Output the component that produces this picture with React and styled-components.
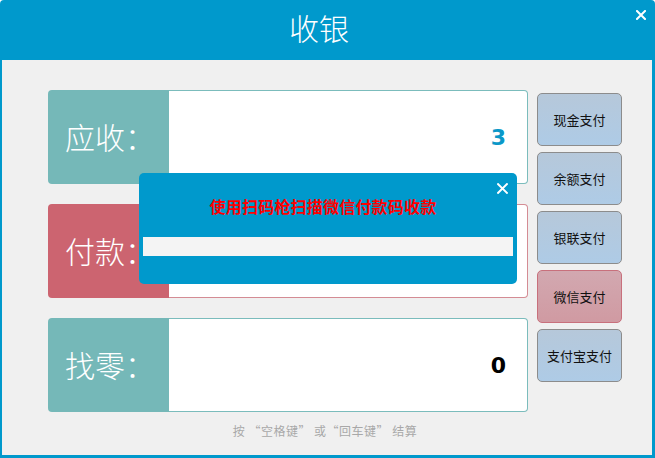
import React from "react";
import styled, { createGlobalStyle } from "styled-components";

const Global = createGlobalStyle`
  html, body { margin: 0; padding: 0; background: #ffffff; }
  body { font-family: "Noto Sans CJK SC", "Noto Sans", sans-serif; }
`;

const Window = styled.div`
  position: relative;
  width: 655px;
  height: 458px;
  box-sizing: border-box;
  background: #0099cc;
  border-radius: 4px 4px 0 0;
  display: flex;
  flex-direction: column;
  padding: 0 3px 3px 2px;
  overflow: hidden;
`;

const Header = styled.div`
  height: 60px;
  display: flex;
  align-items: center;
  justify-content: center;
  color: #ffffff;
  font-family: "Noto Sans CJK SC", sans-serif;
  font-weight: 300;
  font-size: 30px;
  padding: 0 16px 6px 0;
  box-sizing: border-box;
`;

const CloseBtn = styled.div`
  position: absolute;
  top: ${(p) => p.$top}px;
  right: ${(p) => p.$right}px;
  width: ${(p) => p.$size}px;
  height: ${(p) => p.$size}px;
  display: flex;
`;

const Body = styled.div`
  flex: 1;
  background: #f0f0f0;
  padding-top: 30px;
  display: flex;
  flex-direction: column;
`;

const Main = styled.div`
  display: flex;
  padding-left: 46px;
`;

const Rows = styled.div`
  width: 480px;
  display: flex;
  flex-direction: column;
  gap: 20px;
`;

const Row = styled.div`
  height: 94px;
  display: flex;
`;

const Label = styled.div`
  width: 121px;
  background: ${(p) => p.$bg};
  border-radius: 4px 0 0 4px;
  color: #ffffff;
  font-family: "Noto Sans CJK SC", sans-serif;
  font-weight: 300;
  font-size: 30px;
  display: flex;
  align-items: center;
  justify-content: center;
  padding: 0 0 2px 3px;
  box-sizing: border-box;
`;

const Value = styled.div`
  flex: 1;
  background: #ffffff;
  border: 1px solid ${(p) => p.$border};
  border-left: none;
  border-radius: 0 4px 4px 0;
  display: flex;
  align-items: center;
  justify-content: flex-end;
  padding-right: 21px;
  font-family: "DejaVu Sans", sans-serif;
  font-weight: bold;
  font-size: 22px;
  color: ${(p) => p.$color};
`;

const Buttons = styled.div`
  margin-left: 9px;
  padding-top: 3px;
  display: flex;
  flex-direction: column;
  gap: 6px;
`;

const PayButton = styled.div`
  width: 85px;
  height: 53px;
  box-sizing: border-box;
  border-radius: 5px;
  border: 1px solid ${(p) => (p.$active ? "#c8707c" : "#8c8c8c")};
  background: ${(p) =>
    p.$active
      ? "linear-gradient(#d2a8b0, #d09aa2)"
      : "linear-gradient(#b6c8da, #aecbe6)"};
  display: flex;
  align-items: center;
  justify-content: center;
  font-size: 13px;
  color: #111111;
`;

const Hint = styled.div`
  margin-top: 10px;
  text-align: center;
  font-size: 12px;
  letter-spacing: 0.5px;
  color: #a8a8a8;
  padding-right: 4px;
`;

const Modal = styled.div`
  position: absolute;
  left: 139px;
  top: 173px;
  width: 378px;
  height: 111px;
  background: #0099cc;
  border-radius: 5px;
  box-sizing: border-box;
  padding: 20px 4px 0 4px;
  display: flex;
  flex-direction: column;
`;

const ModalText = styled.div`
  text-align: center;
  color: #ff0000;
  font-weight: bold;
  font-size: 16px;
  letter-spacing: 0.2px;
  line-height: 26px;
  padding-right: 10px;
`;

const ScanInput = styled.div`
  margin-top: 18px;
  height: 19px;
  background: #f4f4f4;
`;

const X = ({ size, w }) => (
  <svg width={size} height={size} viewBox="0 0 10 10">
    <path d="M1 1 L9 9 M9 1 L1 9" stroke="#ffffff" strokeWidth={w} strokeLinecap="square" />
  </svg>
);

export default function App() {
  const buttons = ["现金支付", "余额支付", "银联支付", "微信支付", "支付宝支付"];
  return (
    <>
      <Global />
      <Window>
        <Header>收银</Header>
        <CloseBtn $top={10} $right={9} $size={10}>
          <X size={10} w={2} />
        </CloseBtn>
        <Body>
          <Main>
            <Rows>
              <Row>
                <Label $bg="#75b8b8">应收：</Label>
                <Value $border="#7bbcbc" $color="#0a98c8">3</Value>
              </Row>
              <Row>
                <Label $bg="#cc6470">付款：</Label>
                <Value $border="#d48c94" $color="#000000"></Value>
              </Row>
              <Row>
                <Label $bg="#75b8b8">找零：</Label>
                <Value $border="#7bbcbc" $color="#000000">0</Value>
              </Row>
            </Rows>
            <Buttons>
              {buttons.map((b) => (
                <PayButton key={b} $active={b === "微信支付"}>
                  {b}
                </PayButton>
              ))}
            </Buttons>
          </Main>
          <Hint>按 “空格键” 或“回车键” 结算</Hint>
        </Body>
        <Modal>
          <CloseBtn $top={10} $right={9} $size={11}>
            <X size={11} w={1.8} />
          </CloseBtn>
          <ModalText>使用扫码枪扫描微信付款码收款</ModalText>
          <ScanInput />
        </Modal>
      </Window>
    </>
  );
}
